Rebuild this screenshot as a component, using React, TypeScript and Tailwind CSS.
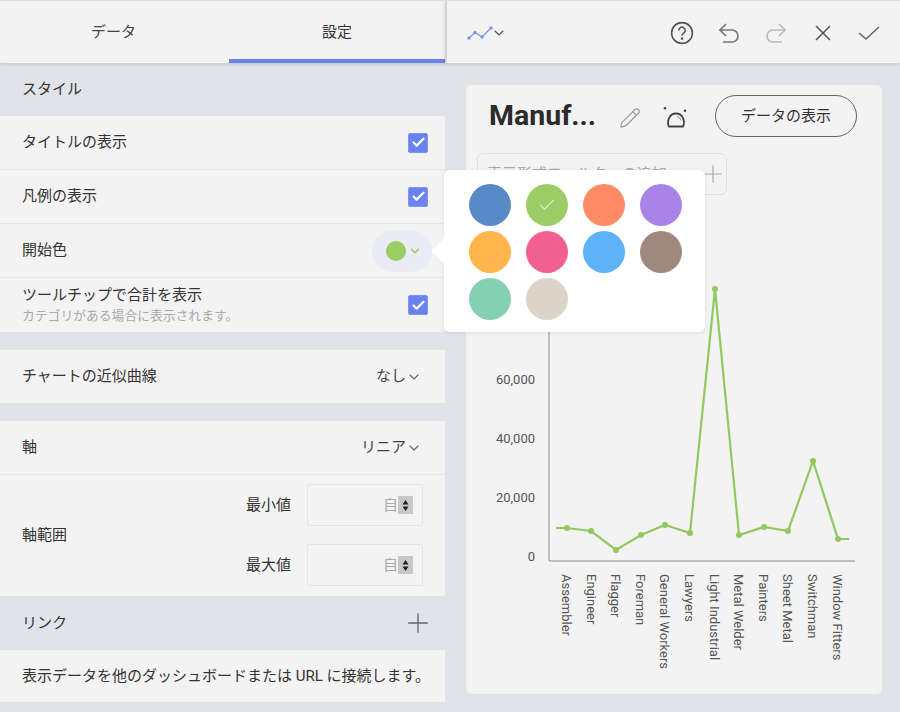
import { Check, ChevronDown, Plus, Pencil } from "lucide-react";

const FONT = "font-['Roboto','Noto_Sans_CJK_JP',sans-serif]";

const swatches = [
  "bg-[#5a8ac6]",
  "bg-[#9ccc65]",
  "bg-[#ff8a65]",
  "bg-[#a983e6]",
  "bg-[#ffb74d]",
  "bg-[#f26091]",
  "bg-[#60b2f8]",
  "bg-[#a1887f]",
  "bg-[#86d0b4]",
  "bg-[#ddd4c9]",
];

const categories = [
  "Assembler",
  "Engineer",
  "Flagger",
  "Foreman",
  "General Workers",
  "Lawyers",
  "Light Industrial",
  "Metal Welder",
  "Painters",
  "Sheet Metal",
  "Switchman",
  "Window Fitters",
];

// svg coordinates: origin at the chart's top-left, page (466, 200)
const points = [
  [101, 328],
  [125, 331],
  [150, 350],
  [175, 335],
  [199, 325],
  [224, 333],
  [249, 89],
  [273, 335],
  [298, 327],
  [322, 331],
  [347, 261],
  [372, 339],
];

const Checkbox = () => (
  <div className="flex h-5 w-5 items-center justify-center rounded-[2px] border border-[#8194ef] bg-[#6b83ee]">
    <Check className="h-[15px] w-[15px] text-white" strokeWidth={3.5} />
  </div>
);

const Row = ({ label, children }: { label: string; children?: React.ReactNode }) => (
  <div className="flex h-[53px] items-center justify-between bg-[#f3f3f3] pl-[22px] pr-[17px] text-[15px] text-[#333]">
    <span>{label}</span>
    {children}
  </div>
);

const Select = ({ value }: { value: string }) => (
  <div className="mr-[6px] flex items-center text-[15px] text-[#444]">
    <span>{value}</span>
    <ChevronDown className="h-4 w-4 text-[#666]" strokeWidth={1.75} />
  </div>
);

const NumberField = ({ label }: { label: string }) => (
  <div className="flex items-center justify-end gap-4">
    <span className="text-[15px] text-[#333]">{label}</span>
    <div className="flex h-[42px] w-[116px] items-center justify-end rounded-[2px] border border-[#e4e4e4] pr-[9px]">
      <span className="w-[15px] overflow-hidden text-[15px] leading-none whitespace-nowrap text-[#aaa]">自動</span>
      <div className="flex h-[18px] w-[15px] flex-col items-center justify-center bg-[#c8c8c8]">
        <svg width="7" height="13" viewBox="0 0 7 13">
          <path d="M3.500 1 6.500 5.500h-6zM3.500 12 .5 7.500h6z" fill="#222" />
        </svg>
      </div>
    </div>
  </div>
);

const Toolbar = () => (
  <div className="flex h-[62px] items-center justify-between border-l-2 border-[#d4d4d4] bg-[#f3f3f3] pl-[20px] pr-[19px] pt-[2px] shadow-[0_1px_3px_rgba(0,0,0,0.15)]">
    <div className="flex items-center">
      <svg width="26" height="14" viewBox="0 0 26 14" fill="none">
        <path d="M2 12 8 6.500 15 11 24 2" stroke="#7d92ee" strokeWidth="1.3" />
        <g fill="#7d92ee">
          <circle cx="2" cy="12" r="1.7" />
          <circle cx="8" cy="6.500" r="1.7" />
          <circle cx="15" cy="11" r="1.7" />
          <circle cx="24" cy="2" r="1.700" />
        </g>
      </svg>
      <ChevronDown className="-ml-[2px] h-4 w-4 text-[#555]" strokeWidth={1.75} />
    </div>
    <div className="flex items-center">
      <svg width="24" height="24" viewBox="0 0 24 24" fill="none" stroke="#555" strokeWidth="1.6" className="mr-[24px]">
        <circle cx="12" cy="12" r="10.400" />
        <path d="M8.800 9.400a3.200 3.200 0 1 1 4.900 2.700c-1 .7-1.700 1.200-1.700 2.600" />
        <circle cx="12" cy="17.600" r=".5" fill="#555" />
      </svg>
      <svg width="22" height="22" viewBox="0 0 22 22" fill="none" stroke="#777" strokeWidth="1.7" className="mr-[25px]">
        <path d="M8 2 2 8l6 6" />
        <path d="M2 8h12a6 6 0 0 1 0 12H5" />
      </svg>
      <svg width="22" height="22" viewBox="0 0 22 22" fill="none" stroke="#bbb" strokeWidth="1.7" className="mr-[25px]">
        <path d="M14 2l6 6-6 6" />
        <path d="M20 8H8a6 6 0 0 0 0 12h9" />
      </svg>
      <svg width="22" height="22" viewBox="0 0 22 22" fill="none" stroke="#555" strokeWidth="1.5" className="mr-[23px]">
        <path d="M4 4l14 14M18 4 4 18" />
      </svg>
      <svg width="24" height="24" viewBox="0 0 24 24" fill="none" stroke="#666" strokeWidth="1.5">
        <path d="M2 12l7 6L22 6" />
      </svg>
    </div>
  </div>
);

const Chart = () => (
  <svg width="410" height="480" viewBox="0 0 410 480" className="mt-[5px]">
    <path d="M83 50V361H389" fill="none" stroke="#8a8a8a" strokeWidth="1" />
    {[
      ["60,000", 179],
      ["40,000", 238],
      ["20,000", 297],
      ["0", 356],
    ].map(([t, y]) => (
      <text key={t} x="69" y={Number(y) + 5} textAnchor="end" fontSize="13" fontFamily="Roboto" fill="#555">
        {t}
      </text>
    ))}
    <polyline
      points={`90,328 ${points.map((p) => p.join(",")).join(" ")} 383,339`}
      fill="none"
      stroke="#92c95f"
      strokeWidth="2.2"
    />
    {points.map(([x, y]) => (
      <circle key={x} cx={x} cy={y} r="3" fill="#92c95f" />
    ))}
    {categories.map((c, i) => (
      <text
        key={c}
        transform={`translate(${96 + i * 24.6} 374) rotate(90)`}
        fontSize="13"
        fontFamily="Roboto"
        fill="#555"
      >
        {c}
      </text>
    ))}
  </svg>
);

const App = () => {
  return (
    <div className={`relative flex h-[712px] w-[900px] overflow-hidden border-t border-[#e0e0e0] bg-[#e2e3e8] ${FONT}`}>
      <aside className="flex w-[445px] flex-col">
        <div className="flex h-[62px] bg-[#f3f3f3] text-[15px] shadow-[0_1px_3px_rgba(0,0,0,0.15)]">
          <div className="flex w-[229px] items-center justify-center pr-[2px] text-[#444]">データ</div>
          <div className="flex flex-1 items-center justify-center border-b-4 border-[#6b83ee] pt-[4px] text-[#333]">設定</div>
        </div>

        <div className="flex h-[53px] items-center pl-[22px] text-[15px] text-[#333]">スタイル</div>

        <div className="flex flex-col gap-px bg-[#e6e6ea]">
          <Row label="タイトルの表示">
            <Checkbox />
          </Row>
          <Row label="凡例の表示">
            <Checkbox />
          </Row>
          <Row label="開始色">
            <div className="-mr-1 flex h-[42px] w-[60px] items-center gap-[1px] rounded-full bg-[#e9ecf5] pl-[14px]">
              <div className="h-5 w-5 rounded-full bg-[#9ccc65]" />
              <ChevronDown className="ml-px h-[14px] w-[14px] text-[#9ccc65]" strokeWidth={2.75} />
            </div>
          </Row>
          <div className="flex h-[54px] items-center justify-between bg-[#f3f3f3] pl-[22px] pr-[17px]">
            <div className="flex flex-col">
              <span className="text-[15px] leading-[18px] text-[#333]">ツールチップで合計を表示</span>
              <span className="mt-[3px] text-[12.8px] leading-[17px] text-[#aaa]">カテゴリがある場合に表示されます。</span>
            </div>
            <Checkbox />
          </div>
        </div>

        <div className="mt-[18px]">
          <Row label="チャートの近似曲線">
            <Select value="なし" />
          </Row>
        </div>

        <div className="mt-[18px] flex flex-col gap-px bg-[#e6e6ea]">
          <Row label="軸">
            <Select value="リニア" />
          </Row>
          <div className="flex h-[121px] items-center justify-between bg-[#f3f3f3] pb-px pl-[22px] pr-[22px]">
            <span className="text-[15px] text-[#333]">軸範囲</span>
            <div className="flex flex-col gap-[18px]">
              <NumberField label="最小値" />
              <NumberField label="最大値" />
            </div>
          </div>
        </div>

        <div className="flex h-[54px] items-center justify-between pl-[22px] pr-[11px] text-[15px] text-[#333]">
          <span>リンク</span>
          <Plus className="h-8 w-8 text-[#666]" strokeWidth={1} />
        </div>
        <div className="flex h-[52px] items-center bg-[#f3f3f3] pl-[22px] text-[15px] text-[#333]">
          表示データを他のダッシュボードまたは URL に接続します。
        </div>
      </aside>

      <main className="flex flex-1 flex-col">
        <Toolbar />
        <div className="ml-[21px] mr-[18px] mt-[22px] h-[609px] rounded-md bg-[#f3f3f3]">
          <div className="flex h-[62px] items-center pl-[23px] pr-[25px]">
            <span className="w-[130px] text-[28.5px] font-bold text-[#2b2b2b]">Manuf...</span>
            <Pencil className="mt-[3px] h-[22px] w-[22px] text-[#999]" strokeWidth={1.3} />
            <svg width="24" height="24" viewBox="0 0 24 24" fill="none" className="ml-[22px] mt-[2px]" stroke="#444" strokeWidth="1.5">
              <path d="M6 21.500C3.500 17 6 8.500 13 8.500s9.500 8 7 13z" strokeWidth="1.800" />
              <path d="M14 11.500c2 .5 3.500 2 4 4" stroke="#888" strokeWidth="1" />
              <circle cx="2" cy="3.300" r="1.300" fill="#444" stroke="none" />
              <circle cx="22" cy="5.700" r="1.300" fill="#444" stroke="none" />
            </svg>
            <button className="ml-auto flex h-[42px] w-[142px] items-center justify-center rounded-full border border-[#666] text-[15px] text-[#333]">
              データの表示
            </button>
          </div>
          <div className="ml-[11px] mt-[6px] flex h-[42px] w-[250px] items-center justify-between rounded-md border border-[#e0e0e0] pl-[9px]">
            <span className="text-[15px] text-[#aaa]">表示形式フィルターの追加</span>
            <Plus className="-mr-px h-7 w-7 text-[#aaa]" strokeWidth={1} />
          </div>
          <Chart />
        </div>
      </main>

      {/* color picker popover */}
      <div className="absolute left-[444px] top-[169px] grid h-[162px] w-[261px] grid-cols-[repeat(4,42px)] content-start gap-x-[15px] gap-y-[5px] rounded-md bg-white pl-[25px] pt-[14px] shadow-[0_1px_4px_rgba(0,0,0,0.08)]">
        <div className="absolute -left-[9px] top-[72px] h-[18px] w-[18px] rotate-45 bg-white" />
        {swatches.map((s, i) => (
          <div key={s} className={`relative flex h-[42px] w-[42px] items-center justify-center rounded-full ${s}`}>
            {i === 1 && <Check className="h-5 w-5 text-[#e8f3d8]" strokeWidth={1.25} />}
          </div>
        ))}
      </div>
    </div>
  );
};

export default App;
